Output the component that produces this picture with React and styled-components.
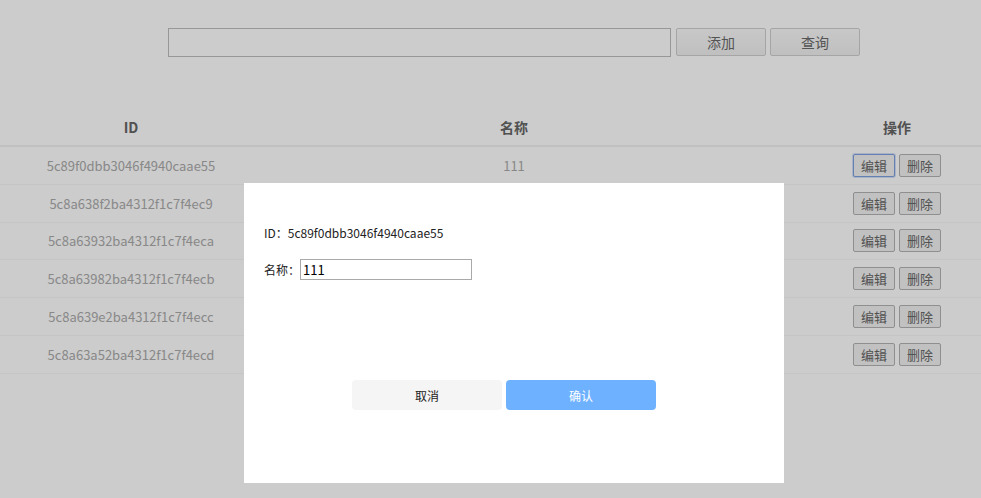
import styled, { createGlobalStyle } from 'styled-components';

const rows = [
	{ id: '5c89f0dbb3046f4940caae55', name: '111' },
	{ id: '5c8a638f2ba4312f1c7f4ec9', name: '' },
	{ id: '5c8a63932ba4312f1c7f4eca', name: '' },
	{ id: '5c8a63982ba4312f1c7f4ecb', name: '' },
	{ id: '5c8a639e2ba4312f1c7f4ecc', name: '' },
	{ id: '5c8a63a52ba4312f1c7f4ecd', name: '' },
];

export default function App() {
	return (
		<>
			<GlobalStyle />
			<Page>
				<Toolbar>
					<SearchInput />
					<ToolButton>添加</ToolButton>
					<ToolButton>查询</ToolButton>
				</Toolbar>
				<Table>
					<HeadCell>ID</HeadCell>
					<HeadCell>名称</HeadCell>
					<HeadCell>操作</HeadCell>
					{rows.map((r, i) => (
						<Row key={r.id}>
							<Cell>{r.id}</Cell>
							<Cell>{r.name}</Cell>
							<Cell>
								<Actions>
									<SmallButton focused={i === 0}>编辑</SmallButton>
									<SmallButton>删除</SmallButton>
								</Actions>
							</Cell>
						</Row>
					))}
				</Table>
			</Page>
			<Mask />
			<Modal>
				<Line>ID：5c89f0dbb3046f4940caae55</Line>
				<Line>
					名称：<NameInput defaultValue="111" />
				</Line>
				<Footer>
					<DialogButton>取消</DialogButton>
					<DialogButton primary>确认</DialogButton>
				</Footer>
			</Modal>
		</>
	);
}

const GlobalStyle = createGlobalStyle`
	html, body {
		margin: 0;
		background: #fff;
		overflow: hidden;
		font-family: "Noto Sans CJK SC", "Noto Sans", sans-serif;
	}
`;

const Page = styled.div`
	width: 981px;
	height: 498px;
	padding-top: 28px;
	box-sizing: border-box;
	overflow: hidden;
`;

const Toolbar = styled.div`
	display: flex;
	align-items: flex-start;
	gap: 4px;
	padding-left: 168px;
`;

const SearchInput = styled.input`
	width: 503px;
	height: 29px;
	box-sizing: border-box;
	border: 1px solid #bdbdbd;
	margin: 0 1px 0 0;
	background: #fff;
`;

const ToolButton = styled.button`
	width: 90px;
	height: 28px;
	margin: 0;
	border: 1px solid #cfcfcf;
	border-radius: 2px;
	background: linear-gradient(#fafafa, #f0f0f0);
	color: #6a6a6a;
	font-family: inherit;
	font-size: 14px;
	padding: 0;
`;

const Table = styled.div`
	display: grid;
	grid-template-columns: 262px 504px 262px;
	margin-top: 51px;
	width: 1028px;
`;

const HeadCell = styled.div`
	height: 37px;
	display: flex;
	align-items: center;
	justify-content: center;
	font-size: 14px;
	font-weight: bold;
	color: #666;
	border-bottom: 2px solid #f1f1f1;
`;

const Row = styled.div`
	display: contents;
`;

const Cell = styled.div`
	height: 36.8px;
	display: flex;
	align-items: center;
	justify-content: center;
	font-size: 13px;
	color: #ababab;
	border-bottom: 1px solid #f7f7f7;
`;

const Actions = styled.div`
	display: flex;
	gap: 4px;
`;

const SmallButton = styled.button`
	width: 42px;
	height: 23px;
	margin: 0;
	padding: 0;
	border: 1px solid ${({ focused }) => (focused ? '#7f9fe0' : '#b3b3b3')};
	box-shadow: ${({ focused }) => (focused ? '0 0 0 1px #d3e0f7' : 'none')};
	border-radius: 2px;
	background: #f2f2f2;
	color: #666;
	font-family: inherit;
	font-size: 13px;
`;

const Mask = styled.div`
	position: fixed;
	inset: 0;
	background: rgba(0, 0, 0, 0.2);
`;

const Modal = styled.div`
	position: fixed;
	left: 244px;
	top: 183px;
	width: 540px;
	height: 300px;
	box-sizing: border-box;
	background: #fff;
	padding: 39px 20px 0;
	display: flex;
	flex-direction: column;
	gap: 16px;
	font-size: 12px;
	color: #222;
`;

const Line = styled.div`
	display: flex;
	align-items: center;
	height: 21px;
`;

const NameInput = styled.input`
	width: 172px;
	height: 21px;
	box-sizing: border-box;
	border: 1px solid #a9a9a9;
	padding: 0 2px;
	font-family: inherit;
	font-size: 13px;
	color: #000;
	outline: none;
`;

const Footer = styled.div`
	display: flex;
	gap: 4px;
	margin-top: 84px;
	padding-left: 88px;
`;

const DialogButton = styled.button`
	width: 150px;
	height: 30px;
	border: none;
	border-radius: 4px;
	background: ${({ primary }) => (primary ? '#6eb1ff' : '#f5f5f5')};
	color: ${({ primary }) => (primary ? '#fff' : '#222')};
	font-family: inherit;
	font-size: 12px;
	padding: 0;
`;
